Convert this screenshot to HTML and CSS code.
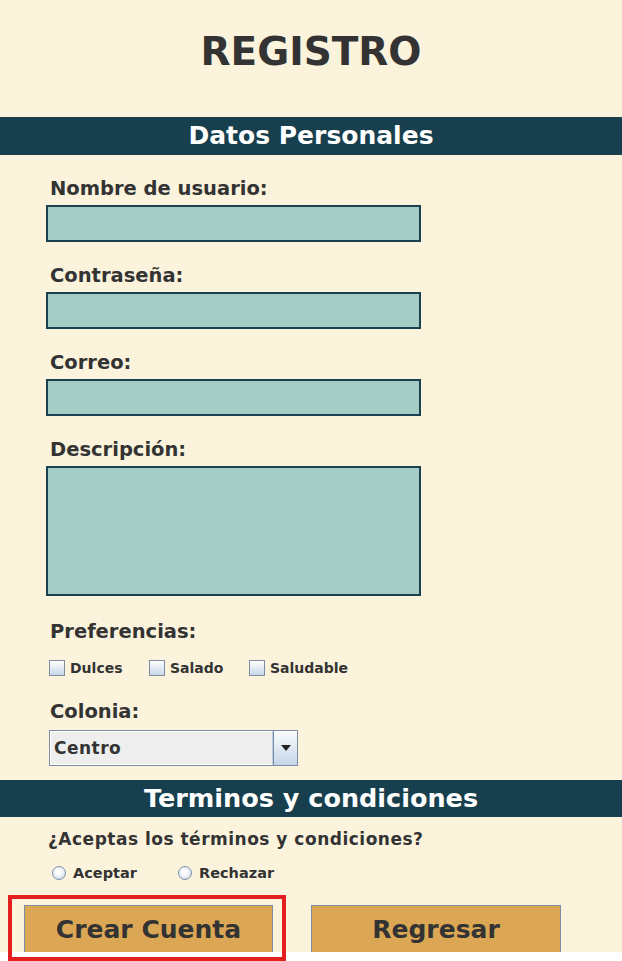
FILE: index.html
```html
<!DOCTYPE html>
<html lang="es">
<head>
<meta charset="utf-8">
<title>Registro</title>
<link rel="stylesheet" href="styles.css">
</head>
<body>
<div class="page">
  <div class="panel">
    <h1 class="title">REGISTRO</h1>
    <div class="bar">Datos Personales</div>
    <div class="fields">
      <div class="field">
        <label class="label">Nombre de usuario:</label>
        <input class="input" type="text">
      </div>
      <div class="field">
        <label class="label">Contraseña:</label>
        <input class="input" type="password">
      </div>
      <div class="field">
        <label class="label">Correo:</label>
        <input class="input" type="text">
      </div>
      <div class="field">
        <label class="label">Descripción:</label>
        <textarea class="input area"></textarea>
      </div>
      <div class="field field-pref">
        <label class="label">Preferencias:</label>
        <div class="checks">
          <label class="check"><input type="checkbox" class="box"><span>Dulces</span></label>
          <label class="check"><input type="checkbox" class="box"><span>Salado</span></label>
          <label class="check"><input type="checkbox" class="box"><span>Saludable</span></label>
        </div>
      </div>
      <div class="field field-col">
        <label class="label">Colonia:</label>
        <div class="combo">
          <span class="combo-value">Centro</span>
          <span class="combo-btn"><span class="arrow"></span></span>
        </div>
      </div>
    </div>
    <div class="bar bar-terms">Terminos y condiciones</div>
    <p class="question">¿Aceptas los términos y condiciones?</p>
    <div class="radios">
      <label class="radio"><input type="radio" name="t" class="dot"><span>Aceptar</span></label>
      <label class="radio"><input type="radio" name="t" class="dot"><span>Rechazar</span></label>
    </div>
    <div class="buttons">
      <button class="btn">Crear Cuenta</button>
      <button class="btn">Regresar</button>
    </div>
  </div>
  <div class="highlight"></div>
</div>
</body>
</html>
```
FILE: styles.css
```css
* { box-sizing: border-box; }
html, body { margin: 0; padding: 0; background: #ffffff; }
body {
  font-family: "DejaVu Sans", Verdana, sans-serif;
  font-weight: bold;
  color: #333333;
  width: 622px;
}
.page { position: relative; width: 622px; height: 961px; }
.panel {
  background: #fbf3dc;
  display: flex;
  flex-direction: column;
}
.title {
  margin: 0;
  height: 117px;
  padding-top: 28px;
  font-size: 39px;
  line-height: 48px;
  text-align: center;
  color: #333333;
}
.bar {
  height: 38px;
  background: #173f4e;
  color: #ffffff;
  font-size: 25px;
  line-height: 38px;
  text-align: center;
}
.bar-terms {
  margin-top: 14px;
  height: 37px;
  line-height: 37px;
  font-size: 25.5px;
}
.fields { display: flex; flex-direction: column; }
.field {
  display: flex;
  flex-direction: column;
  padding-top: 22px;
  padding-left: 46px;
}
.label {
  display: block;
  font-size: 19.5px;
  line-height: 24px;
  height: 24px;
  padding-left: 4px;
  margin-bottom: 4px;
}
.input {
  display: block;
  width: 375px;
  height: 37px;
  margin: 0;
  border: 2px solid #1a4150;
  background: #a6cdc5;
  font: inherit;
  resize: none;
  outline: none;
}
.area { height: 130px; }
.field-pref { padding-top: 24px; }
.checks {
  display: grid;
  grid-template-columns: 100px 100px 110px;
  margin-top: 10px;
  padding-left: 3px;
  height: 20px;
}
.check {
  display: flex;
  align-items: center;
  gap: 5px;
  font-size: 14px;
  line-height: 20px;
}
.box {
  appearance: none;
  -webkit-appearance: none;
  margin: 0;
  width: 16px;
  height: 16px;
  border: 1px solid #7d8ea4;
  background: linear-gradient(#fdfeff, #c9d8e8);
}
.field-col .label { margin-bottom: 6px; }
.combo {
  display: flex;
  width: 249px;
  height: 36px;
  margin-left: 3px;
  border: 1px solid #7d8ea4;
  background: #eeeeee;
}
.combo-value {
  flex: 1;
  border: 1px solid #ffffff;
  border-right: 1px solid #b9cde2;
  font-size: 17px;
  letter-spacing: 0.5px;
  line-height: 32px;
  padding-left: 3px;
}
.combo-btn {
  width: 24px;
  border-left: 1px solid #7d8ea4;
  background: linear-gradient(#fbfcfe, #c5d6e8);
  display: flex;
  align-items: center;
  justify-content: center;
}
.arrow {
  width: 0;
  height: 0;
  border-left: 5px solid transparent;
  border-right: 5px solid transparent;
  border-top: 6px solid #222222;
}
.question {
  margin: 12px 0 0 48px;
  font-size: 17px;
  letter-spacing: 0.5px;
  line-height: 20px;
  height: 20px;
}
.radios {
  display: grid;
  grid-template-columns: 126px 120px;
  margin: 14px 0 0 52px;
  height: 20px;
}
.radio {
  display: flex;
  align-items: center;
  gap: 7px;
  font-size: 14.5px;
  line-height: 20px;
}
.dot {
  appearance: none;
  -webkit-appearance: none;
  margin: 0;
  width: 14px;
  height: 14px;
  border-radius: 50%;
  border: 1px solid #7d8ea4;
  background: radial-gradient(circle at 45% 40%, #ffffff 20%, #c3d3e5 100%);
}
.buttons {
  display: flex;
  gap: 38px;
  margin: 22px 0 0 24px;
}
.btn {
  width: 249px;
  height: 47px;
  margin: 0;
  padding: 0;
  border: 1px solid #7d8ea4;
  border-bottom: none;
  background: #dca754;
  color: #333333;
  font-family: inherit;
  font-weight: bold;
  font-size: 25px;
  line-height: 45px;
}
.btn + .btn { width: 250px; }
.highlight {
  position: absolute;
  left: 8px;
  top: 895px;
  width: 278px;
  height: 66px;
  border: 4px solid #e41f1f;
}
```
